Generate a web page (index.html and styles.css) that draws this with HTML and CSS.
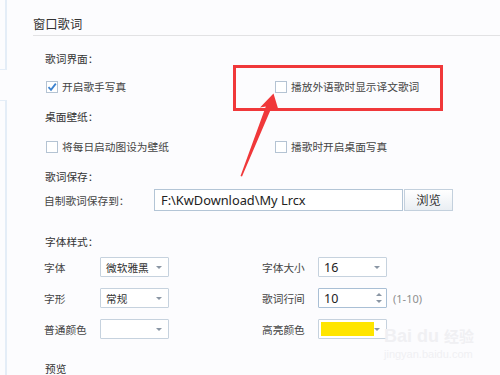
FILE: index.html
```html
<!DOCTYPE html>
<html lang="zh-CN">
<head>
<meta charset="utf-8">
<link rel="stylesheet" href="styles.css">
</head>
<body>
<div class="page">
  <div class="rail"><div class="rail-top"></div><div class="rail-bottom"></div></div>
  <div class="main">
    <div class="title">窗口歌词</div>
    <div class="body">
      <div class="section-label s1">歌词界面：</div>
      <div class="check-row r1">
        <label class="check"><span class="box checked"><svg width="12" height="12" viewBox="0 0 12 12"><path d="M2.5 6.2 L5 8.8 L9.8 2.6" fill="none" stroke="#3d82cf" stroke-width="1.8"/></svg></span>开启歌手写真</label>
        <label class="check"><span class="box"></span>播放外语歌时显示译文歌词</label>
      </div>
      <div class="section-label s2">桌面壁纸：</div>
      <div class="check-row r2">
        <label class="check"><span class="box"></span>将每日启动图设为壁纸</label>
        <label class="check"><span class="box"></span>播歌时开启桌面写真</label>
      </div>
      <div class="section-label s3">歌词保存：</div>
      <div class="save-row">
        <span class="save-label">自制歌词保存到：</span>
        <div class="path-input">F:\KwDownload\My Lrcx</div>
        <div class="browse-btn">浏览</div>
      </div>
      <div class="section-label s4">字体样式：</div>
      <div class="font-row fr1">
        <span class="flabel">字体</span>
        <div class="select"><span class="sval cjk">微软雅黑</span><span class="caret"></span></div>
        <span></span>
        <span class="flabel">字体大小</span>
        <div class="select"><span class="sval num">16</span><span class="caret"></span></div>
      </div>
      <div class="font-row fr2">
        <span class="flabel">字形</span>
        <div class="select"><span class="sval cjk">常规</span><span class="caret"></span></div>
        <span></span>
        <span class="flabel">歌词行间</span>
        <div class="select spin"><span class="sval num">10</span><span class="spin-arrows"><span class="up"></span><span class="down"></span></span></div>
        <span class="range">(1-10)</span>
      </div>
      <div class="font-row fr3">
        <span class="flabel">普通颜色</span>
        <div class="select"><span class="sval"></span><span class="caret"></span></div>
        <span></span>
        <span class="flabel">高亮颜色</span>
        <div class="select color"><span class="swatch"></span><span class="caret"></span></div>
      </div>
      <div class="section-label s5">预览</div>
    </div>
  </div>
</div>
<div class="watermark">
  <div class="wm-logo">Bai du <span class="wm-cn">经验</span></div>
  <div class="wm-url">jingyan.baidu.com</div>
</div>
<svg class="annot" width="500" height="375" viewBox="0 0 500 375">
  <rect x="234.5" y="66.5" width="207" height="43" fill="none" stroke="#f0383a" stroke-width="3"/>
  <polygon points="273.5,93.5 278.5,110 271.3,108.3 242,176.5 240.5,176 265.8,106.5 260,107.5" fill="#f0383a"/>
</svg>
</body>
</html>
```

FILE: styles.css
```css
html, body {
  margin: 0;
  padding: 0;
}
body {
  width: 500px;
  height: 375px;
  overflow: hidden;
  background: #fcfcfe;
  font-family: "Noto Sans CJK SC", "Microsoft YaHei", sans-serif;
  color: #3a3a3a;
  position: relative;
}
.page {
  display: flex;
  height: 375px;
}
.rail {
  width: 7px;
  display: flex;
  flex-direction: column;
}
.rail-top {
  height: 70px;
  border-right: 2px solid #e4edf7;
  border-bottom: 1px solid #e4edf7;
  box-sizing: border-box;
}
.rail-bottom {
  margin-top: 30px;
  flex: 1;
  border-right: 2px solid #e4edf7;
  border-top: 1px solid #e4edf7;
  box-sizing: border-box;
}
.main {
  flex: 1;
  padding-left: 26px;
}
.title {
  padding-top: 15px;
  padding-bottom: 2px;
  line-height: 18px;
  height: 18px;
  font-size: 12.3px;
  color: #333;
  border-bottom: 1px solid #e2e2e4;
}
.body {
  padding-left: 12px;
  font-size: 10.7px;
}
.section-label {
  height: 20px;
  line-height: 20px;
  color: #333;
}
.s1 { margin-top: 13px; }
.s2 { margin-top: 10px; }
.s3 { margin-top: 10px; }
.s4 { margin-top: 21px; }
.s5 { margin-top: 20px; }

.check-row {
  display: grid;
  grid-template-columns: 229px auto;
  height: 20px;
}
.r1 { margin-top: 8px; }
.r2 { margin-top: 10px; }
.check {
  display: flex;
  align-items: center;
  gap: 4px;
  color: #444;
  line-height: 20px;
}
.box {
  margin-left: 1px;
  width: 12px;
  height: 12px;
  box-sizing: border-box;
  border: 1px solid #b4c3d3;
  background: #fff;
  position: relative;
}
.box.checked svg {
  position: absolute;
  left: -1px;
  top: -1px;
}

.save-row {
  margin-top: 2px;
  height: 22px;
  display: flex;
  align-items: center;
  margin-left: -1px;
}
.save-label {
  width: 110px;
  color: #444;
}
.path-input {
  width: 249px;
  height: 22px;
  box-sizing: border-box;
  border: 1px solid #b3c5d6;
  background: #fff;
  font-family: "Noto Sans", "Open Sans", sans-serif;
  font-size: 12.8px;
  line-height: 20px;
  padding-left: 6px;
  color: #222;
}
.browse-btn {
  margin-left: 1px;
  width: 49px;
  height: 22px;
  box-sizing: border-box;
  border: 1px solid #c3d0dd;
  background: linear-gradient(#ffffff, #e9eef3);
  font-size: 12.3px;
  line-height: 20px;
  text-align: center;
  color: #333;
}

.font-row {
  display: grid;
  grid-template-columns: 56px 69px 93px 56px 69px auto;
  align-items: center;
  height: 20px;
  margin-left: -1px;
}
.fr1 { margin-top: 5px; }
.fr2 { margin-top: 11px; }
.fr3 { margin-top: 11px; }
.flabel {
  color: #444;
}
.select {
  height: 20px;
  box-sizing: border-box;
  border: 1px solid #c6d2de;
  background: #fff;
  border-radius: 1px;
  display: flex;
  align-items: center;
  position: relative;
}
.sval {
  padding-left: 5px;
  flex: 1;
  color: #333;
}
.sval.num {
  font-family: "Noto Sans", "Open Sans", sans-serif;
  font-size: 12.5px;
  color: #222;
}
.caret {
  width: 0;
  height: 0;
  border-left: 3px solid transparent;
  border-right: 3px solid transparent;
  border-top: 3px solid #8a96a4;
  margin-right: 6px;
}
.spin {
  border-color: #a9bfd5;
}
.spin-arrows {
  display: flex;
  flex-direction: column;
  gap: 4px;
  margin-right: 4px;
}
.spin-arrows .up {
  width: 0;
  height: 0;
  border-left: 3px solid transparent;
  border-right: 3px solid transparent;
  border-bottom: 3px solid #8a96a4;
}
.spin-arrows .down {
  width: 0;
  height: 0;
  border-left: 3px solid transparent;
  border-right: 3px solid transparent;
  border-top: 3px solid #8a96a4;
}
.range {
  padding-left: 6px;
  font-family: "Noto Sans", "Open Sans", sans-serif;
  font-size: 11px;
  color: #8f8f8f;
}
.color .swatch {
  margin-left: 2px;
  width: 53px;
  height: 14px;
  background: #ffe500;
  flex: none;
}
.color .caret {
  margin-left: auto;
  margin-right: 6px;
}

.watermark {
  position: absolute;
  left: 384px;
  top: 325px;
  color: #f0f0f3;
  font-family: "Liberation Sans", sans-serif;
  pointer-events: none;
}
.wm-logo {
  font-size: 18px;
  font-weight: bold;
  line-height: 22px;
}
.wm-cn {
  font-family: "Noto Sans CJK SC", sans-serif;
  font-size: 15px;
}
.wm-url {
  font-size: 11px;
  line-height: 14px;
}
.annot {
  position: absolute;
  left: 0;
  top: 0;
  pointer-events: none;
}
```
